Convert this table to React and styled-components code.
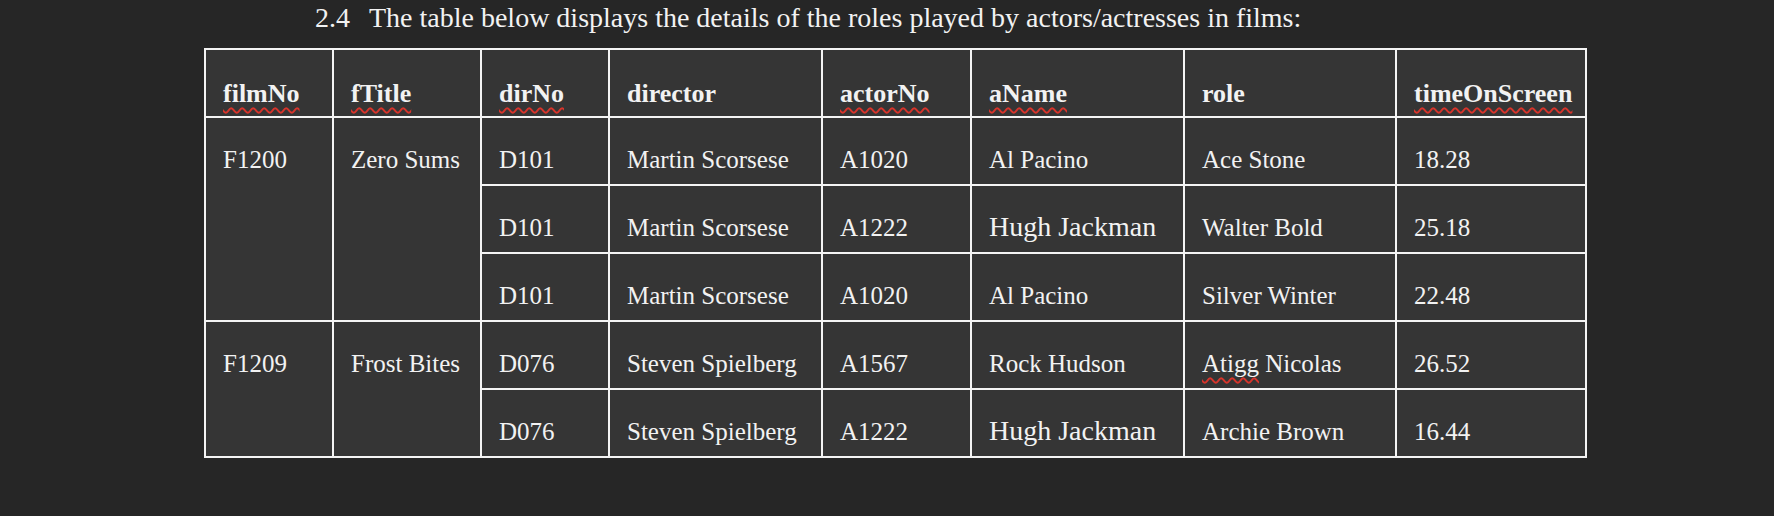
import styled, { createGlobalStyle } from "styled-components";

const GlobalStyle = createGlobalStyle`
  html, body {
    margin: 0;
    background: #262626;
  }
  body {
    font-family: "Liberation Serif", "Times New Roman", serif;
    color: #f2f2f2;
  }
`;

const Page = styled.div`
  width: 1774px;
  height: 516px;
  background: #262626;
  padding-top: 2px;
  box-sizing: border-box;
`;

const Heading = styled.p`
  margin: 0 0 14px 315px;
  font-size: 28px;
  line-height: 32px;
  color: #f2f2f2;
  white-space: nowrap;
`;

const Num = styled.span`
  display: inline-block;
  margin-right: 19px;
`;

const Table = styled.div`
  margin-left: 204px;
  width: 1383px;
  box-sizing: border-box;
  display: grid;
  grid-template-columns: 126px 146px 126px 211px 147px 211px 210px 188px;
  grid-auto-rows: 66px;
  gap: 2px;
  padding: 2px;
  background: #f4f4f4;
`;

const Cell = styled.div`
  grid-row: ${(p) => (p.$span ? `span ${p.$span}` : "auto")};
  background: #353535;
  padding: ${(p) => (p.$big ? "27px" : p.$head ? "30px" : "28px")} 0 0 17px;
  font-size: ${(p) => (p.$big ? "28px" : p.$head ? "26px" : "25px")};
  font-weight: ${(p) => (p.$head ? 700 : 400)};
  line-height: 28px;
  white-space: nowrap;
  color: #f2f2f2;
`;

const Misspelt = styled.span`
  text-decoration: underline wavy #d9342b;
  text-decoration-thickness: 1.5px;
  text-underline-offset: 5px;
`;

const headers = [
  { label: "filmNo", flag: true },
  { label: "fTitle", flag: true },
  { label: "dirNo", flag: true },
  { label: "director" },
  { label: "actorNo", flag: true },
  { label: "aName", flag: true },
  { label: "role" },
  { label: "timeOnScreen", flag: true },
];

const films = [
  {
    no: "F1200",
    title: "Zero Sums",
    roles: [
      ["D101", "Martin Scorsese", "A1020", "Al Pacino", "Ace Stone", "18.28"],
      ["D101", "Martin Scorsese", "A1222", "Hugh Jackman", "Walter Bold", "25.18"],
      ["D101", "Martin Scorsese", "A1020", "Al Pacino", "Silver Winter", "22.48"],
    ],
  },
  {
    no: "F1209",
    title: "Frost Bites",
    roles: [
      ["D076", "Steven Spielberg", "A1567", "Rock Hudson", "Atigg Nicolas", "26.52"],
      ["D076", "Steven Spielberg", "A1222", "Hugh Jackman", "Archie Brown", "16.44"],
    ],
  },
];

const renderRole = (text) => {
  if (text.startsWith("Atigg")) {
    return (
      <>
        <Misspelt>Atigg</Misspelt>
        {text.slice(5)}
      </>
    );
  }
  return text;
};

const App = () => {
  return (
    <Page>
      <GlobalStyle />
      <Heading>
        <Num>2.4</Num>The table below displays the details of the roles played by actors/actresses in films:
      </Heading>
      <Table>
        {headers.map((h) => (
          <Cell key={h.label} $head>
            {h.flag ? <Misspelt>{h.label}</Misspelt> : h.label}
          </Cell>
        ))}
        {films.map((film) =>
          [
            <Cell key={film.no} $span={film.roles.length}>
              {film.no}
            </Cell>,
            <Cell key={film.title} $span={film.roles.length}>
              {film.title}
            </Cell>,
          ].concat(
            film.roles.map((r, i) =>
              r.map((val, j) => (
                <Cell key={`${film.no}-${i}-${j}`} $big={val === "Hugh Jackman"}>
                  {j === 4 ? renderRole(val) : val}
                </Cell>
              ))
            )
          )
        )}
      </Table>
    </Page>
  );
};

export default App;
